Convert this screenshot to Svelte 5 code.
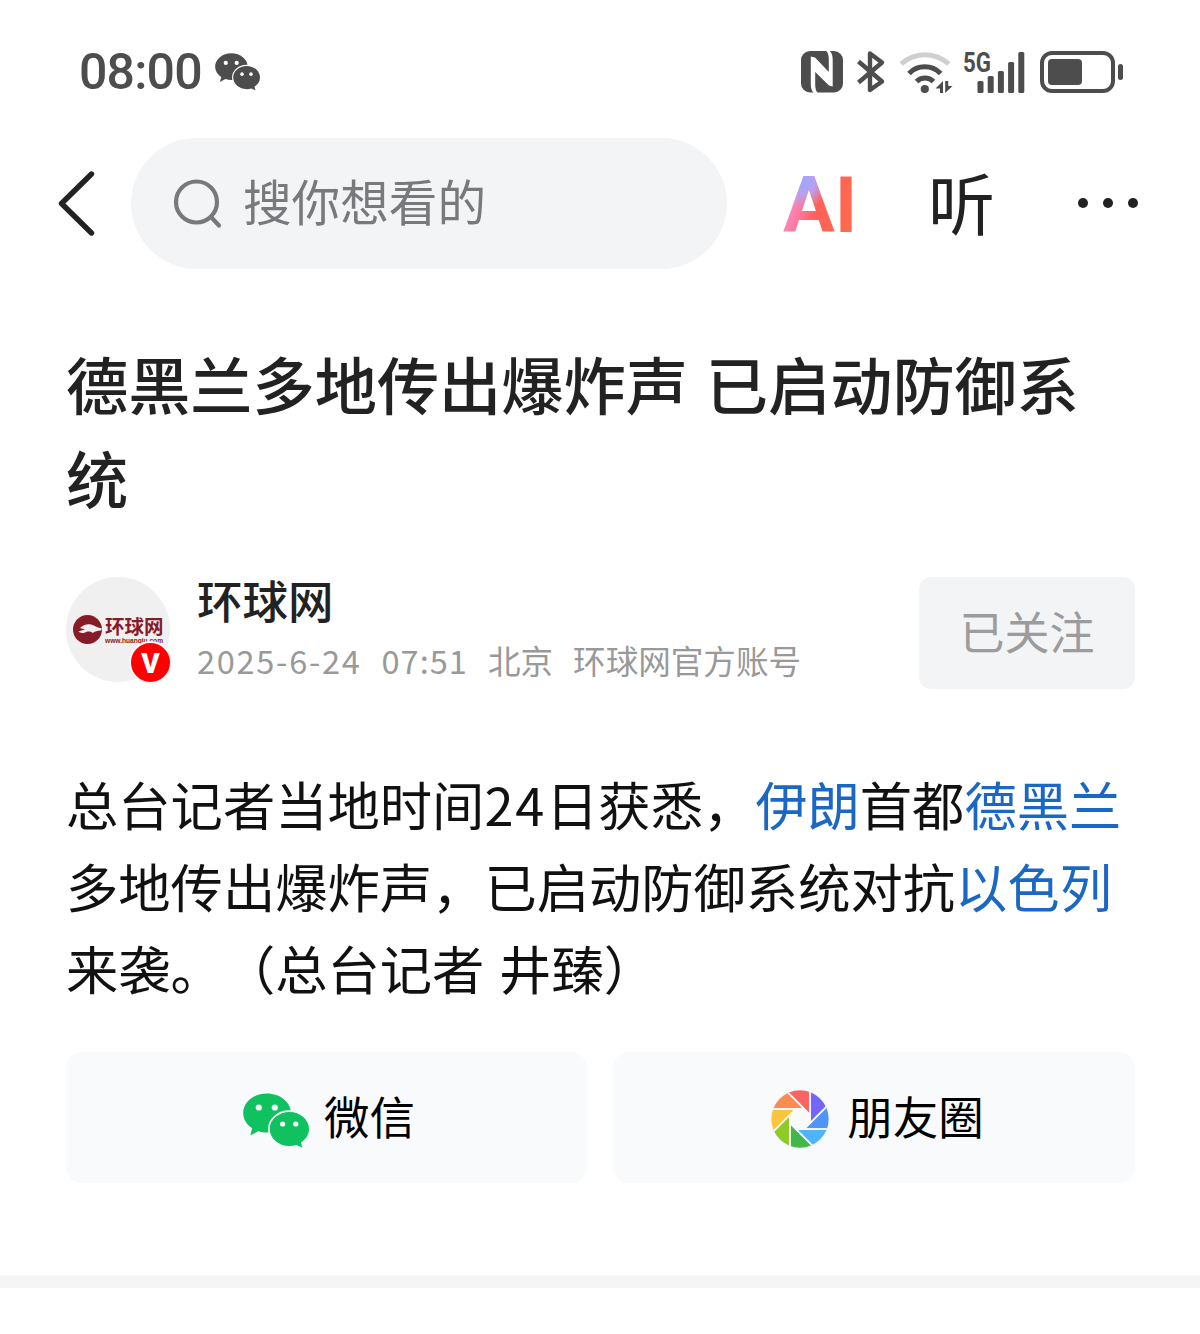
<script lang="ts">
	const signalBars = [12, 17, 22, 31, 41];

	// Blades of the moments icon, clockwise from the top
	const blades = ["#fb6362", "#7566fb", "#4f93fb", "#4db4fd", "#43b549", "#8fcb26", "#fdc43d", "#fb8c51"];

	let keyword = "搜你想看的";
</script>

<svelte:head>
	<title>德黑兰多地传出爆炸声 已启动防御系统</title>
</svelte:head>

{#snippet wechat(size: number, fill: string, gap: string)}
	<svg width={size} height={(size * 55) / 66} viewBox="0 0 66 55">
		<path
			{fill}
			d="M24 0.4C10.8 0.4 0.2 9.2 0.2 20c0 6.3 3.4 11.6 9 15.2L7.3 42.4l8-4.2c2.8 0.9 5.6 1.3 8.7 1.3 13.2 0 24-8.7 24-19.5S37.2 0.4 24 0.4z"
		/>
		<path
			{fill}
			stroke={gap}
			stroke-width="3.4"
			paint-order="stroke"
			d="M46.4 19C35.5 19 26.7 26.6 26.7 36s8.8 17 19.7 17c2.5 0 4.8-0.4 7-1.1l6 2.9-1.5-5.3C63 46.300 66 41.500 66 36c0-9.400-8.800-17-19.600-17z"
		/>
		<g fill={gap}>
			<circle cx="15.8" cy="14.5" r="3.1" />
			<circle cx="31.8" cy="14.5" r="3.1" />
			<circle cx="39.6" cy="31" r="2.6" />
			<circle cx="52.8" cy="31" r="2.6" />
		</g>
	</svg>
{/snippet}

<div class="status">
	<span class="time">08:00</span>
	{@render wechat(45, "#4d4d4d", "#fff")}
	<div class="indicators">
		<svg class="nfc" width="42" height="42" viewBox="0 0 42 42">
			<rect width="42" height="41.5" rx="9" fill="#4d4d4d" />
			<path
				d="M9.8 5.5L14 6.5 27.8 21V9c0-4-0.500-7-2.500-9h3.400c2 2 3 4.500 3 9v26.500L28 34.500 14.200 21v12c0 4 0.500 7 2.500 9h-3.900c-2-2-3-4.500-3-9z"
				fill="#fff"
			/>
		</svg>
		<svg class="bluetooth" width="28" height="42" viewBox="0 0 28 42">
			<path
				d="M1.5 10.5L25 30.5 13 39V2.5L25 11.5 1.5 31.5"
				fill="none"
				stroke="#4d4d4d"
				stroke-width="4.4"
				stroke-linejoin="round"
			/>
		</svg>
		<svg class="wifi" width="54" height="43" viewBox="0 0 54 43">
			<g fill="none" stroke="#4d4d4d" stroke-width="5">
				<path d="M2.2 13a35 35 0 0 1 47.6 0" stroke="#cfcfcf" />
				<path d="M10 22.5a22 22 0 0 1 31.6 0" />
				<path d="M17.5 30.5a12 12 0 0 1 17 0" />
			</g>
			<circle cx="25.8" cy="38" r="4.1" fill="#4d4d4d" />
			<path d="M44 30v12h-3v-4.500h-4.500zM46.200 42V30h3v5h4.300z" fill="#4d4d4d" />
		</svg>
		<svg class="signal" width="62" height="42" viewBox="0 0 62 42">
			<text x="0" y="20.5" textLength="28" lengthAdjust="spacingAndGlyphs">5G</text>
			{#each signalBars as height, i}
				<rect x={14.5 + i * 10.2} y={42 - height} width="6" {height} rx="1.5" fill="#4d4d4d" />
			{/each}
		</svg>
		<div class="battery"><div class="level"></div></div>
		<div class="nub"></div>
	</div>
</div>

<header>
	<button class="back" aria-label="返回">
		<svg width="38" height="66" viewBox="0 0 38 66">
			<path
				d="M34.5 3L4.500 32.500l30 29.500"
				fill="none"
				stroke="#222"
				stroke-width="5.4"
				stroke-linecap="round"
				stroke-linejoin="round"
			/>
		</svg>
	</button>
	<div class="search">
		<svg width="48" height="50" viewBox="0 0 48 50">
			<g fill="none" stroke="#77797c" stroke-width="4.2" stroke-linecap="round">
				<circle cx="22.5" cy="23" r="20.500" />
				<path d="M37 38l8 8.500" />
			</g>
		</svg>
		<span>{keyword}</span>
	</div>
	<span class="ai">AI</span>
	<span class="listen">听</span>
	<div class="more"><i></i><i></i><i></i></div>
</header>

<main>
	<h1>德黑兰多地传出爆炸声 已启动防御系统</h1>

	<section class="author">
		<div class="avatar">
			<svg width="29" height="29" viewBox="0 0 29 29">
				<circle cx="14.5" cy="14.5" r="14.5" fill="#861c28" />
				<path
					d="M5.5 16.5c3-1 4.5-1.5 6.5-2l-5-1.5c3-3 7-4.5 11-3.5 4 1 6.5 3.5 11 4l-1 2c-4 0.500-6 0.500-8 2.500-4-2.500-6-1.500-8-0.500-2.500 1-4.500 0.500-6.500-1z"
					fill="#f0f0f0"
				/>
			</svg>
			<div class="brand">
				<b>环球网</b>
				<small>www.huanqiu.com</small>
			</div>
			<span class="badge">V</span>
		</div>
		<div class="info">
			<div class="name">环球网</div>
			<div class="meta">
				<span class="date">2025-6-24</span>
				<span class="clock">07:51</span>
				<span>北京</span>
				<span>环球网官方账号</span>
			</div>
		</div>
		<button class="follow">已关注</button>
	</section>

	<p>总台记者当地时间<span class="num">24</span>日获悉，<a href="#iran">伊朗</a>首都<a href="#tehran">德黑兰</a><br
		/>多地传出爆炸声，已启动防御系统对抗<a href="#israel">以色列</a><br />来袭。（总台记者 井臻）</p>

	<section class="share">
		<button>
			{@render wechat(66, "#10c160", "#f9fafc")}
			<span>微信</span>
		</button>
		<button class="moments">
			<svg width="58" height="58" viewBox="-86 -86 172 172">
				<clipPath id="lens"><circle r="85" /></clipPath>
				<g clip-path="url(#lens)">
					{#each blades as color, i}
						<path
							d="M30 -12.5V-100H-57.5z"
							fill={color}
							stroke="#f9fafc"
							stroke-width="5"
							transform="rotate({i * 45})"
						/>
					{/each}
				</g>
			</svg>
			<span>朋友圈</span>
		</button>
	</section>
</main>

<div class="divider"></div>

<style>
	:global(body) {
		background: #fff;
		font-family: "Noto Sans CJK SC", "Noto Sans", sans-serif;
	}

	button {
		border: none;
		padding: 0;
		font: inherit;
		background: none;
	}

	svg {
		display: block;
		flex: none;
		overflow: visible;
	}

	.status {
		display: flex;
		align-items: center;
		height: 138px;
		padding: 6px 77px 0 79px;
		box-sizing: border-box;
	}

	.time {
		width: 136px;
		font: 500 50px/60px Roboto, sans-serif;
		letter-spacing: -0.8px;
		color: #4d4d4d;
	}

	.indicators {
		display: flex;
		align-items: center;
		margin-left: auto;
	}

	.nfc {
		overflow: hidden;
		margin-right: 14px;
	}

	.bluetooth {
		margin-right: 14px;
	}

	.wifi {
		margin-right: 10px;
	}

	.signal {
		margin-right: 15px;
	}

	.signal text {
		font: 700 28px Roboto, sans-serif;
		fill: #4d4d4d;
	}

	.battery {
		width: 75px;
		height: 42px;
		padding: 4px;
		box-sizing: border-box;
		border: 4px solid #4d4d4d;
		border-radius: 12px;
	}

	.level {
		width: 34px;
		height: 26px;
		border-radius: 4px;
		background: #4d4d4d;
	}

	.nub {
		width: 5px;
		height: 16px;
		margin-left: 3px;
		border-radius: 3px;
		background: #4d4d4d;
	}

	header {
		display: flex;
		align-items: center;
		height: 131px;
		padding: 0 62px 0 57px;
	}

	.back {
		width: 74px;
	}

	.search {
		display: flex;
		align-items: center;
		gap: 21px;
		width: 596px;
		height: 131px;
		padding-left: 43px;
		box-sizing: border-box;
		border-radius: 66px;
		background: #f3f4f6;
		color: #77797c;
		font-size: 48.6px;
		line-height: 60px;
	}

	.search span {
		margin-top: -7px;
	}

	.ai {
		width: 70px;
		margin: 5px 0 0 56px;
		font: 700 77px/77px Roboto, sans-serif;
		color: transparent;
		background:
			radial-gradient(circle at 20px 14px, #9aa8ff 0, #b9a0f0 12px, transparent 26px),
			linear-gradient(105deg, #ff8fc8 12%, #fb7fae 26%, #ff6058 50%, #ff6a4e 90%);
		background-clip: text;
	}

	.listen {
		margin: -6px 0 0 75px;
		font-size: 67px;
		line-height: 70px;
		color: #222;
	}

	.more {
		display: flex;
		justify-content: space-between;
		width: 60px;
		margin: -1px 0 0 auto;
	}

	.more i {
		width: 10px;
		height: 10px;
		border-radius: 50%;
		background: #222;
	}

	main {
		padding: 67px 65px 0 66px;
	}

	h1 {
		margin: 0;
		font-size: 62.2px;
		font-weight: 500;
		line-height: 94px;
		word-spacing: 4px;
		color: #222;
	}

	.author {
		display: flex;
		height: 112px;
		margin-top: 53px;
	}

	.avatar {
		position: relative;
		display: flex;
		align-items: center;
		gap: 3px;
		width: 104px;
		height: 105px;
		padding-left: 7px;
		box-sizing: border-box;
		border-radius: 50%;
		background: #f0f0f0;
		color: #861c28;
	}

	.brand b {
		display: block;
		font-size: 19.5px;
		line-height: 20px;
	}

	.brand small {
		display: block;
		margin-top: 2px;
		font: 700 6.6px/6px "Liberation Sans", sans-serif;
	}

	.badge {
		position: absolute;
		right: -2px;
		bottom: -2px;
		width: 39px;
		height: 39px;
		border: 2px solid #f8f8f8;
		border-radius: 50%;
		background: #fe0000;
		color: #fff;
		font: 900 28px/42px Roboto, sans-serif;
		text-align: center;
	}

	.info {
		margin: -4px 0 0 27px;
	}

	.name {
		font-size: 45.5px;
		font-weight: 500;
		line-height: 52px;
		color: #222;
	}

	.meta {
		display: flex;
		gap: 20px;
		margin-top: 11px;
		font-size: 32.6px;
		line-height: 48px;
		color: #999;
	}

	.date {
		letter-spacing: 1.7px;
	}

	.clock {
		letter-spacing: 1px;
	}

	.follow {
		width: 216px;
		margin-left: auto;
		padding-bottom: 6px;
		border-radius: 12px;
		background: #f3f4f6;
		color: #9c9c9d;
		font-size: 45px;
	}

	p {
		margin: 73px 0 0;
		font-size: 52.3px;
		line-height: 82px;
		white-space: nowrap;
		word-spacing: 3px;
		text-spacing-trim: space-all;
		color: #111;
	}

	.num {
		letter-spacing: 1.8px;
	}

	a {
		color: #1b68c4;
		text-decoration: none;
	}

	.share {
		display: grid;
		grid-template-columns: 521px 522px;
		gap: 26px;
		margin-top: 44px;
	}

	.share button {
		display: flex;
		align-items: center;
		justify-content: center;
		gap: 15px;
		height: 131px;
		padding: 6px 0 0 5px;
		border-radius: 16px;
		background: #f9fafc;
		color: #000;
		font-size: 45.5px;
		line-height: 60px;
	}

	.share .moments {
		gap: 18px;
		padding: 2px 0 0 7px;
	}

	.share span {
		margin-top: -12px;
	}

	.share .moments span {
		margin-top: -8px;
	}

	.divider {
		height: 13px;
		margin-top: 92px;
		background: #f5f5f6;
	}
</style>
